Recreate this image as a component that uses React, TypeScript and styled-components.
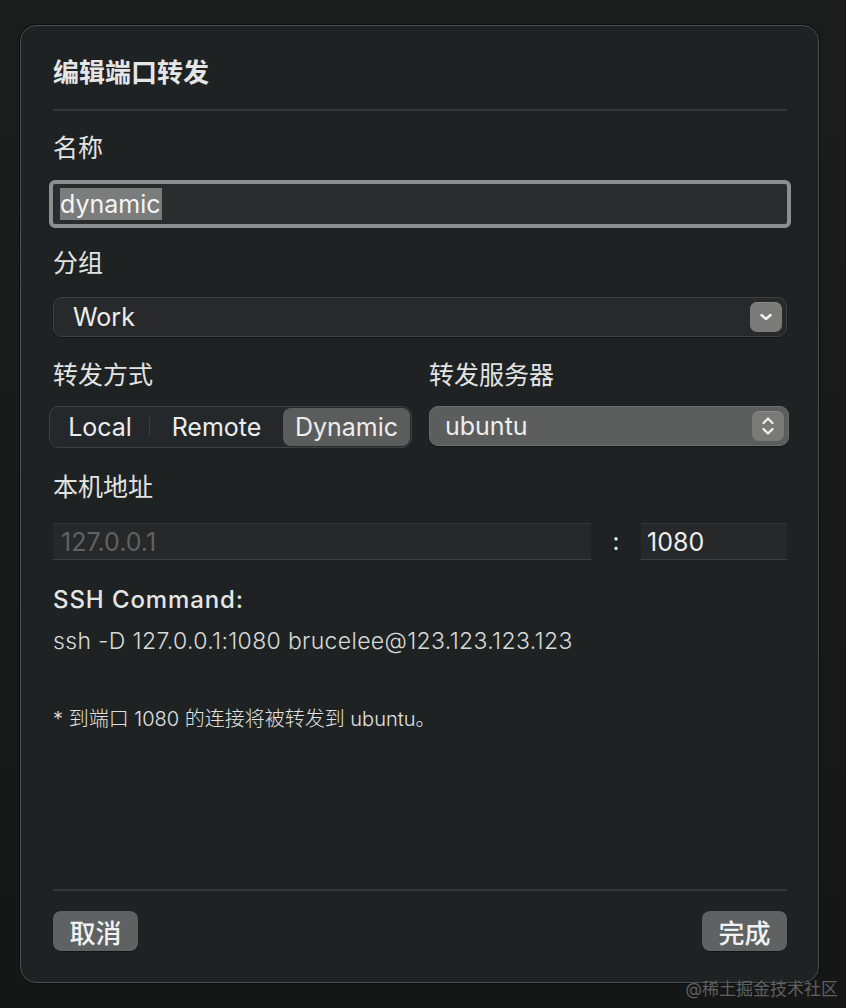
import React from 'react'
import styled, { createGlobalStyle } from 'styled-components';

const FONT = `"Inter", "Noto Sans CJK SC", sans-serif`;

const GlobalStyle = createGlobalStyle`
  html, body {
    margin: 0;
    padding: 0;
    background: #151717;
  }
  body {
    font-family: ${FONT};
    color: #e6e8e8;
  }
`;

const ChevronDown = () => (
  <svg width="16" height="10" viewBox="0 0 16 10">
    <path d="M3.5 3 L8 7 L12.5 3" fill="none" stroke="#f2f2f0" strokeWidth="2.4" strokeLinecap="round" strokeLinejoin="round" />
  </svg>
);

const ChevronUpDown = () => (
  <svg width="16" height="24" viewBox="0 0 16 24">
    <path d="M3.5 9 L8 4.5 L12.5 9" fill="none" stroke="#f2f2f0" strokeWidth="2.2" strokeLinecap="round" strokeLinejoin="round" />
    <path d="M3.5 15 L8 19.5 L12.5 15" fill="none" stroke="#f2f2f0" strokeWidth="2.2" strokeLinecap="round" strokeLinejoin="round" />
  </svg>
);

const App = () => {
  return (
    <Page>
      <GlobalStyle />
      <Dialog>
        <Title>编辑端口转发</Title>
        <Divider />

        <Label $top={22}>名称</Label>
        <FocusInput>
          <Selected>dynamic</Selected>
        </FocusInput>

        <Label $top={20}>分组</Label>
        <PopUp>
          <PopUpText>Work</PopUpText>
          <ArrowButton><ChevronDown /></ArrowButton>
        </PopUp>

        <TwoCols>
          <Col>
            <Label $top={0}>转发方式</Label>
            <Segmented>
              <Segment $w={98}>Local</Segment>
              <SegSep />
              <Segment $w={133}>Remote</Segment>
              <Segment $w={127} $active>Dynamic</Segment>
            </Segmented>
          </Col>
          <Col>
            <Label $top={0}>转发服务器</Label>
            <PopUp $filled>
              <PopUpText>ubuntu</PopUpText>
              <ArrowButton><ChevronUpDown /></ArrowButton>
            </PopUp>
          </Col>
        </TwoCols>

        <Label $top={24}>本机地址</Label>
        <AddressRow>
          <TextField $dim>127.0.0.1</TextField>
          <Colon>:</Colon>
          <TextField $narrow>1080</TextField>
        </AddressRow>

        <CmdTitle>SSH Command:</CmdTitle>
        <CmdText>ssh -D 127.0.0.1:1080 brucelee@123.123.123.123</CmdText>
        <Note>* 到端口 1080 的连接将被转发到 ubuntu。</Note>

        <Spacer />
        <Divider />
        <Footer>
          <Button>取消</Button>
          <Button>完成</Button>
        </Footer>
      </Dialog>
      <Watermark>@稀土掘金技术社区</Watermark>
    </Page>
  )
}

const Page = styled.div`
  position: relative;
  width: 846px;
  height: 1008px;
  padding: 25px 27px 25px 20px;
  box-sizing: border-box;
  background: linear-gradient(180deg, #1b1d1d 0%, #151717 100%);
`;

const Dialog = styled.div`
  height: 100%;
  box-sizing: border-box;
  display: flex;
  flex-direction: column;
  padding: 31px 31px 31px 32px;
  background: #1f2223;
  border: 1.5px solid #4a4c4d;
  border-radius: 16px;
  box-shadow: 0 0 0 1px #0e0f0f;
`;

const Title = styled.div`
  font-size: 26px;
  line-height: 32px;
  font-weight: 700;
  color: #e4e6e6;
`;

const Divider = styled.div`
  height: 2px;
  background: #353839;
  margin-top: 20px;
`;

const Label = styled.div<{ $top: number }>`
  margin-top: ${({ $top }) => $top}px;
  font-size: 25px;
  line-height: 30px;
  color: #e2e4e4;
`;

const FocusInput = styled.div`
  margin: 17px -4px 0 -4px;
  height: 48px;
  box-sizing: border-box;
  border: 4px solid #8b8f8f;
  border-radius: 6px;
  background: #2a2d2e;
  display: flex;
  align-items: center;
  padding-left: 7px;
`;

const Selected = styled.span`
  background: #7b7c7c;
  color: #f4f4f4;
  font-size: 25px;
  line-height: 32px;
  padding-right: 1px;
`;

const PopUp = styled.div<{ $filled?: boolean }>`
  margin-top: 19px;
  height: 40px;
  box-sizing: border-box;
  display: flex;
  align-items: center;
  justify-content: space-between;
  padding: 0 4px 0 0;
  border-radius: 9px;
  background: ${({ $filled }) => $filled ? '#5c5e5e' : '#27292a'};
  border: 1px solid ${({ $filled }) => $filled ? '#6a6c6c' : '#3e4142'};
  box-shadow: 0 1px 1px rgba(0,0,0,0.35);
`;

const PopUpText = styled.span`
  font-size: 25px;
  line-height: 32px;
  color: #eceeee;
  padding-left: 19px;
`;

const ArrowButton = styled.div`
  width: 32px;
  height: 30px;
  border-radius: 7px;
  background: #7a7b78;
  display: flex;
  align-items: center;
  justify-content: center;
  box-shadow: inset 0 1px 0 rgba(255,255,255,0.12);
`;

const TwoCols = styled.div`
  margin-top: 23px;
  display: grid;
  grid-template-columns: 359px 360px;
  column-gap: 17px;
`;

const Col = styled.div`
  display: flex;
  flex-direction: column;
  & > ${PopUp} {
    margin-top: 16px;
  }
  & > ${PopUp} ${PopUpText} {
    padding-left: 15px;
  }
`;

const Segmented = styled.div`
  margin: 16px 0 0 -4px;
  height: 42px;
  box-sizing: border-box;
  display: flex;
  align-items: center;
  padding: 1px;
  border-radius: 10px;
  background: #25282a;
  border: 1px solid #3e4142;
  width: 363px;
`;

const Segment = styled.div<{ $active?: boolean; $w: number }>`
  height: 100%;
  width: ${({ $w }) => $w}px;
  box-sizing: border-box;
  display: flex;
  align-items: center;
  justify-content: center;
  font-size: 25px;
  color: #eceeee;
  border-radius: 8px;
  background: ${({ $active }) => $active ? '#5b5d5d' : 'transparent'};
  margin-left: ${({ $active }) => $active ? 'auto' : '0'};
`;

const SegSep = styled.div`
  width: 1px;
  height: 20px;
  background: #3a3d3e;
`;

const AddressRow = styled.div`
  margin-top: 21px;
  display: flex;
  align-items: center;
`;

const TextField = styled.div<{ $dim?: boolean; $narrow?: boolean }>`
  height: 37px;
  box-sizing: border-box;
  flex: ${({ $narrow }) => $narrow ? '0 0 146px' : '0 0 538px'};
  display: flex;
  align-items: center;
  padding-left: ${({ $narrow }) => $narrow ? '6px' : '8px'};
  background: #262829;
  border-top: 1px solid #333637;
  border-bottom: 1px solid #3e4142;
  font-size: 25px;
  color: ${({ $dim }) => $dim ? '#5f6262' : '#eceeee'};
`;

const Colon = styled.div`
  flex: 0 0 50px;
  text-align: center;
  font-size: 24px;
  color: #e6e8e8;
`;

const CmdTitle = styled.div`
  margin-top: 25px;
  font-size: 24px;
  line-height: 30px;
  font-weight: 500;
  letter-spacing: 0.9px;
  color: #e4e6e6;
`;

const CmdText = styled.div`
  margin-top: 11px;
  font-size: 23px;
  line-height: 30px;
  font-weight: 300;
  letter-spacing: 0.34px;
  color: #d8dada;
`;

const Note = styled.div`
  margin-top: 51px;
  font-size: 20px;
  line-height: 24px;
  font-weight: 300;
  color: #e0e2e2;
`;

const Spacer = styled.div`
  flex: 1;
`;

const Footer = styled.div`
  margin-top: 20px;
  display: flex;
  justify-content: space-between;
`;

const Button = styled.div`
  width: 85px;
  height: 40px;
  border-radius: 8px;
  background: #5f6262;
  display: flex;
  align-items: center;
  justify-content: center;
  font-size: 26px;
  font-weight: 500;
  color: #f0f2f2;
  box-shadow: 0 1px 1px rgba(0,0,0,0.4);
`;

const Watermark = styled.div`
  position: absolute;
  right: 8px;
  bottom: 8px;
  font-size: 17px;
  color: #5e6060;
  font-family: ${FONT};
`;

export default App
